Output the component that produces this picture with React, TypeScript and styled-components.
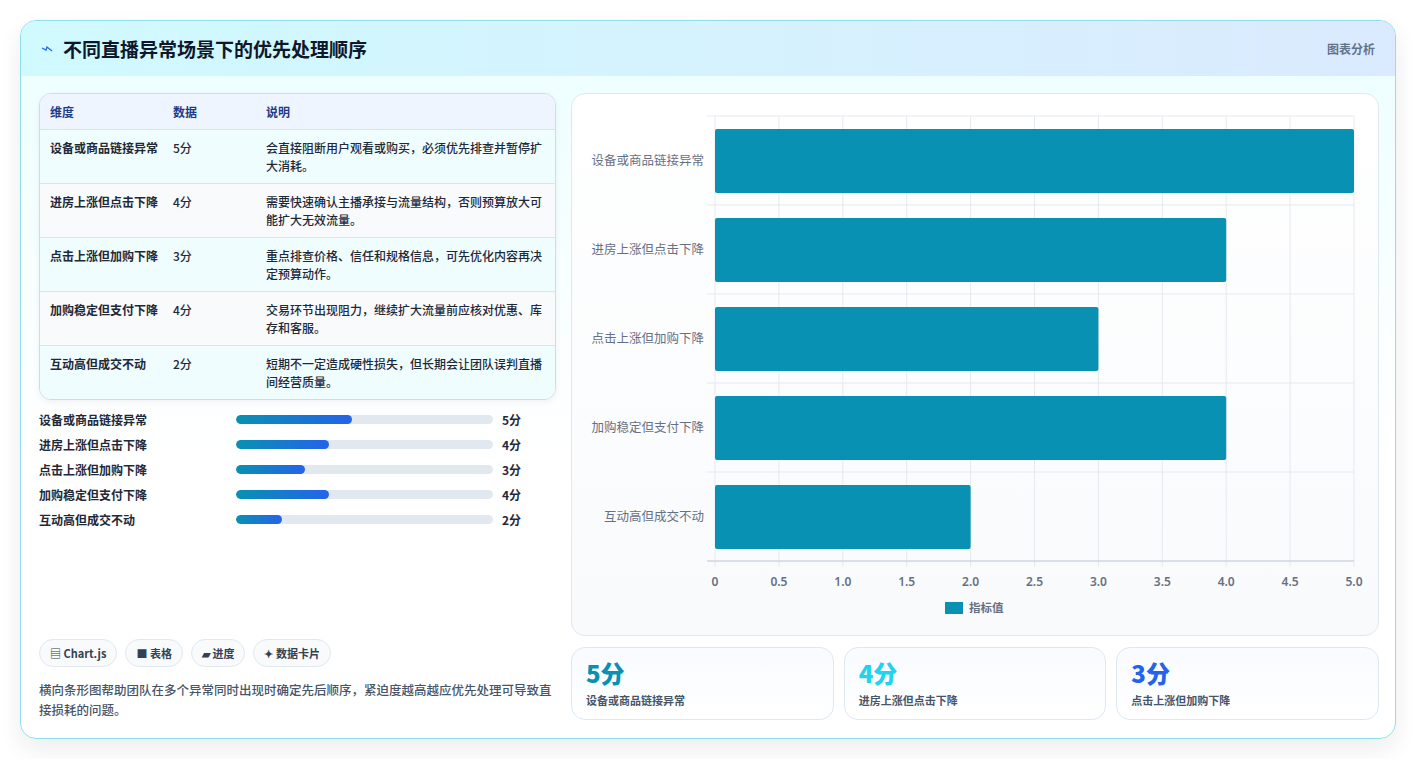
import styled, { createGlobalStyle } from 'styled-components'

const GlobalStyle = createGlobalStyle`
  body {
    margin: 0;
    background: #ffffff;
    font-family: "Noto Sans CJK SC", "Noto Sans", sans-serif;
  }
`

interface IRow {
  name: string
  label: string
  value: number
  note: string
}

const rows: IRow[] = [
  { name: '设备或商品链接异常', label: '设备或商品链接异常', value: 5, note: '会直接阻断用户观看或购买，必须优先排查并暂停扩大消耗。' },
  { name: '进房上涨但点击下降', label: '进房上涨但点击下降', value: 4, note: '需要快速确认主播承接与流量结构，否则预算放大可能扩大无效流量。' },
  { name: '点击上涨但加购下降', label: '点击上涨但加购下降', value: 3, note: '重点排查价格、信任和规格信息，可先优化内容再决定预算动作。' },
  { name: '加购稳定但支付下降', label: '加购稳定但支付下降', value: 4, note: '交易环节出现阻力，继续扩大流量前应核对优惠、库存和客服。' },
  { name: '互动高但成交不动', label: '互动高但成交不动', value: 2, note: '短期不一定造成硬性损失，但长期会让团队误判直播间经营质量。' },
]

const Page = styled.div`
  padding: 20px 20px 20px 20px;
`

const Card = styled.div`
  width: 1376px;
  height: 719px;
  box-sizing: border-box;
  border: 1px solid #8fdfea;
  border-radius: 16px;
  overflow: hidden;
  background: linear-gradient(180deg, #ecfeff 0%, #ffffff 60%);
  box-shadow: 0 10px 24px rgba(15, 23, 42, 0.08);
  display: flex;
  flex-direction: column;
`

const Header = styled.div`
  height: 55px;
  flex-shrink: 0;
  display: flex;
  align-items: center;
  justify-content: space-between;
  padding: 0 20px 0 20px;
  background: linear-gradient(90deg, #cffafe 0%, #dbeafe 100%);
`

const Title = styled.h1`
  margin: 0;
  display: flex;
  align-items: center;
  gap: 10px;
  font-size: 19px;
  font-weight: 700;
  color: #0f172a;
`

const HeaderTag = styled.span`
  font-size: 12px;
  font-weight: 600;
  color: #64748b;
`

const Body = styled.div`
  flex: 1;
  display: grid;
  grid-template-columns: 517px 1fr;
  gap: 15px;
  padding: 17px 18px 18px 18px;
  min-height: 0;
`

const LeftCol = styled.div`
  display: flex;
  flex-direction: column;
`

const Table = styled.div`
  border: 1px solid #cfdbe8;
  border-radius: 12px;
  overflow: hidden;
  background: #ffffff;
  box-shadow: 0 2px 6px rgba(15, 23, 42, 0.06);
`

const TRow = styled.div<{ $head?: boolean; $alt?: boolean }>`
  display: grid;
  grid-template-columns: 123px 93px 1fr;
  padding: ${p => (p.$head ? '9px 10px 8px' : '9px 10px 8px')};
  min-height: ${p => (p.$head ? '16px' : '36px')};
  font-size: 12px;
  line-height: 18px;
  color: ${p => (p.$head ? '#1e3a8a' : '#1f2937')};
  font-weight: ${p => (p.$head ? 600 : 500)};
  background: ${p => (p.$head ? '#eef5ff' : p.$alt ? '#f8fafc' : '#f0fdff')};
  border-top: ${p => (p.$head ? 'none' : '1px solid #dbe4ee')};
`

const NameCell = styled.div`
  font-weight: 600;
  padding-right: 8px;
`

const Bars = styled.div`
  display: flex;
  flex-direction: column;
  gap: 7px;
  margin-top: 10px;
`

const BarRow = styled.div`
  display: grid;
  grid-template-columns: 188px 257px 1fr;
  align-items: center;
  column-gap: 9px;
  font-size: 12px;
  font-weight: 600;
  color: #1f2937;
  height: 18px;
`

const Track = styled.div`
  height: 9px;
  border-radius: 5px;
  background: #e2e8f0;
  overflow: hidden;
`

const Fill = styled.div`
  height: 100%;
  border-radius: 5px;
  background: linear-gradient(90deg, #0891b2, #2563eb);
`

const Spacer = styled.div`
  flex: 1;
`

const Chips = styled.div`
  display: flex;
  gap: 8px;
`

const Chip = styled.span`
  display: inline-flex;
  align-items: center;
  gap: 4px;
  height: 26px;
  padding: 0 10px;
  border: 1px solid #e2e8f0;
  border-radius: 14px;
  background: #f8fafc;
  font-size: 11px;
  font-weight: 600;
  color: #334155;
`

const Desc = styled.p`
  margin: 13px 0 0;
  font-size: 12.5px;
  line-height: 20px;
  font-weight: 500;
  color: #475569;
`

const RightCol = styled.div`
  display: flex;
  flex-direction: column;
  gap: 11px;
  min-height: 0;
`

const ChartPanel = styled.div`
  height: 543px;
  box-sizing: border-box;
  border: 1px solid #dde8f2;
  border-radius: 14px;
  background: linear-gradient(180deg, #ffffff 0%, #f8fafc 100%);
  overflow: hidden;
`

const Stats = styled.div`
  display: grid;
  grid-template-columns: repeat(3, 1fr);
  gap: 10px;
`

const Stat = styled.div`
  height: 73px;
  box-sizing: border-box;
  border: 1px solid #dde8f2;
  border-radius: 14px;
  background: linear-gradient(180deg, #f8fbff, #ffffff);
  padding: 10px 14px;
`

const StatValue = styled.div<{ $color: string }>`
  font-size: 24px;
  font-weight: 800;
  line-height: 30px;
  color: ${p => p.$color};
`

const StatLabel = styled.div`
  margin-top: 4px;
  font-size: 11px;
  font-weight: 600;
  color: #475569;
`

function Chart () {
  const x0 = 143
  const x1 = 782
  const y0 = 22
  const band = 89
  const ticks = [0, 0.5, 1, 1.5, 2, 2.5, 3, 3.5, 4, 4.5, 5]
  const sx = (v: number) => x0 + ((x1 - x0) * v) / 5
  return (
    <svg width="806" height="543" style={{ display: 'block' }}>
      {ticks.map(t => (
        <line key={t} x1={sx(t)} x2={sx(t)} y1={y0} y2={y0 + band * 5 + 6} stroke="#e5e9f0" />
      ))}
      {[0, 1, 2, 3, 4, 5].map(i => (
        <line key={i} x1={x0 - 8} x2={x1} y1={y0 + band * i} y2={y0 + band * i} stroke="#e5e9f0" />
      ))}
      <line x1={x0 - 8} x2={x1} y1={y0 + band * 5} y2={y0 + band * 5} stroke="#c5ccd8" />
      {rows.map((r, i) => (
        <g key={r.name}>
          <rect x={x0} y={y0 + band * i + 13} width={sx(r.value) - x0} height={64} rx={2} fill="#0891b2" />
          <text x={x0 - 11} y={y0 + band * i + 49} textAnchor="end" fontSize="12.5" fill="#667085" fontFamily="Noto Sans CJK SC, sans-serif">{r.label}</text>
        </g>
      ))}
      {ticks.map(t => (
        <text key={t} x={sx(t)} y={492} textAnchor="middle" fontSize="12" fontWeight="600" fill="#667085" fontFamily="Noto Sans, sans-serif">
          {t === 0 ? '0' : t.toFixed(1)}
        </text>
      ))}
      <rect x={373} y={508} width={18} height={12} fill="#0891b2" />
      <text x={397} y={518} fontSize="11.5" fontWeight="600" fill="#667085" fontFamily="Noto Sans CJK SC, sans-serif">指标值</text>
    </svg>
  )
}

export default function App (): JSX.Element {
  return (
    <Page>
      <GlobalStyle />
      <Card>
        <Header>
          <Title>
            <svg width="12" height="10" viewBox="0 0 12 10">
              <path d="M1 4 L5 6 L6 3 L11 7" fill="none" stroke="#2563eb" strokeWidth="1.3" />
            </svg>
            不同直播异常场景下的优先处理顺序
          </Title>
          <HeaderTag>图表分析</HeaderTag>
        </Header>
        <Body>
          <LeftCol>
            <Table>
              <TRow $head>
                <div>维度</div>
                <div>数据</div>
                <div>说明</div>
              </TRow>
              {rows.map((r, i) => (
                <TRow key={r.name} $alt={i % 2 === 1}>
                  <NameCell>{r.name}</NameCell>
                  <div>{r.value}分</div>
                  <div>{r.note}</div>
                </TRow>
              ))}
            </Table>
            <Bars>
              {rows.map(r => (
                <BarRow key={r.name}>
                  <span>{r.name}</span>
                  <Track>
                    <Fill style={{ width: `${r.value * 9}%` }} />
                  </Track>
                  <span>{r.value}分</span>
                </BarRow>
              ))}
            </Bars>
            <Spacer />
            <Chips>
              <Chip>▤ Chart.js</Chip>
              <Chip>■ 表格</Chip>
              <Chip>▰ 进度</Chip>
              <Chip>✦ 数据卡片</Chip>
            </Chips>
            <Desc>横向条形图帮助团队在多个异常同时出现时确定先后顺序，紧迫度越高越应优先处理可导致直接损耗的问题。</Desc>
          </LeftCol>
          <RightCol>
            <ChartPanel>
              <Chart />
            </ChartPanel>
            <Stats>
              <Stat>
                <StatValue $color="#0891b2">5分</StatValue>
                <StatLabel>设备或商品链接异常</StatLabel>
              </Stat>
              <Stat>
                <StatValue $color="#22d3ee">4分</StatValue>
                <StatLabel>进房上涨但点击下降</StatLabel>
              </Stat>
              <Stat>
                <StatValue $color="#2563eb">3分</StatValue>
                <StatLabel>点击上涨但加购下降</StatLabel>
              </Stat>
            </Stats>
          </RightCol>
        </Body>
      </Card>
    </Page>
  )
}
